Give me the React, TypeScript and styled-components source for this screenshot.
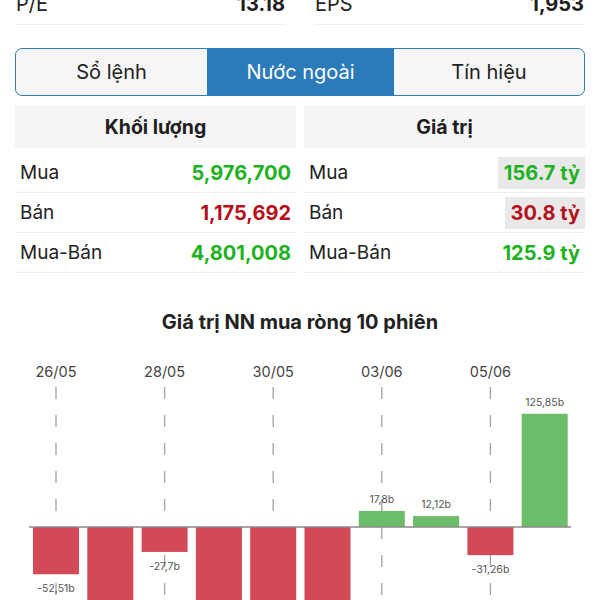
import styled, { createGlobalStyle } from 'styled-components'

const GlobalStyle = createGlobalStyle`
  html, body {
    margin: 0;
    padding: 0;
    background: #fff;
    overflow: hidden;
  }
  body {
    font-family: Inter, 'Noto Sans', sans-serif;
    color: #222;
  }
`

const GREEN = '#1fb21f'
const RED = '#b5111b'

type Row = { label: string; value: string; color: string; marked?: boolean }

const volumeRows: Row[] = [
  { label: 'Mua', value: '5,976,700', color: GREEN },
  { label: 'Bán', value: '1,175,692', color: RED },
  { label: 'Mua-Bán', value: '4,801,008', color: GREEN }
]

const valueRows: Row[] = [
  { label: 'Mua', value: '156.7 tỷ', color: GREEN, marked: true },
  { label: 'Bán', value: '30.8 tỷ', color: RED, marked: true },
  { label: 'Mua-Bán', value: '125.9 tỷ', color: GREEN }
]

// net foreign buy value, billions
const sessions = [
  { date: '26/05', value: -52.51, label: '-52,51b' },
  { date: '', value: -110, label: '' },
  { date: '28/05', value: -27.7, label: '-27,7b' },
  { date: '', value: -120, label: '' },
  { date: '30/05', value: -105, label: '' },
  { date: '', value: -98, label: '' },
  { date: '03/06', value: 17.8, label: '17,8b' },
  { date: '', value: 12.12, label: '12,12b' },
  { date: '05/06', value: -31.26, label: '-31,26b' },
  { date: '', value: 125.85, label: '125,85b' }
]

const tabs = ['Sổ lệnh', 'Nước ngoài', 'Tín hiệu']

const NetChart = () => {
  const zeroY = 182
  const scale = 0.9
  const step = 54.3
  const barW = 46
  const firstX = 41
  return (
    <ChartSvg width={570} height={270} viewBox="0 0 570 270">
      {sessions.map((s, i) =>
        s.date ? (
          <g key={'d' + i}>
            <text
              x={firstX + i * step}
              y={32}
              textAnchor="middle"
              fontSize={14.5}
              fill="#444"
              fontFamily="Inter, sans-serif"
            >
              {s.date}
            </text>
            <line
              x1={firstX + i * step}
              x2={firstX + i * step}
              y1={42}
              y2={270}
              stroke="#a8a8a8"
              strokeWidth={1.4}
              strokeDasharray="12 16"
            />
          </g>
        ) : null
      )}
      {sessions.map((s, i) => {
        const cx = firstX + i * step
        const h = Math.abs(s.value) * scale
        const y = s.value >= 0 ? zeroY - h : zeroY
        return (
          <g key={'b' + i}>
            <rect
              x={cx - barW / 2}
              y={y}
              width={barW}
              height={h}
              fill={s.value >= 0 ? '#6bbd69' : '#d24a57'}
            />
            {s.label && (
              <text
                x={cx}
                y={s.value >= 0 ? y - 8 : y + h + 18}
                textAnchor="middle"
                fontSize={10.5}
                fill="#555"
                fontFamily="Inter, sans-serif"
              >
                {s.label}
              </text>
            )}
          </g>
        )
      })}
      <line x1={14} x2={556} y1={zeroY} y2={zeroY} stroke="#8a8a8a" strokeWidth={1.3} />
    </ChartSvg>
  )
}

const StatTable = ({ title, rows }: { title: string; rows: Row[] }) => (
  <Column>
    <ColumnHeader>{title}</ColumnHeader>
    {rows.map((r) => (
      <DataRow key={r.label}>
        <RowLabel>{r.label}</RowLabel>
        <RowValue $color={r.color} $marked={r.marked}>
          {r.value}
        </RowValue>
      </DataRow>
    ))}
  </Column>
)

export default function App() {
  return (
    <Page>
      <GlobalStyle />
      <StatsRow>
        <StatCell>
          <span>P/E</span>
          <StatValue>13.18</StatValue>
        </StatCell>
        <StatCell>
          <span>EPS</span>
          <StatValue>1,953</StatValue>
        </StatCell>
      </StatsRow>

      <Tabs>
        {tabs.map((t, i) => (
          <Tab key={t} $active={i === 1}>
            {t}
          </Tab>
        ))}
      </Tabs>

      <Tables>
        <StatTable title="Khối lượng" rows={volumeRows} />
        <StatTable title="Giá trị" rows={valueRows} />
      </Tables>

      <ChartTitle>Giá trị NN mua ròng 10 phiên</ChartTitle>
      <NetChart />
    </Page>
  )
}

const Page = styled.div`
  width: 600px;
  height: 600px;
  box-sizing: border-box;
  padding: 0 15px;
  overflow: hidden;
`

const StatsRow = styled.div`
  display: grid;
  grid-template-columns: 1fr 1fr;
  column-gap: 28px;
  margin-top: -16px;
`

const StatCell = styled.div`
  display: flex;
  justify-content: space-between;
  align-items: center;
  height: 40px;
  border-bottom: 1px solid #efefef;
  font-size: 20px;
  color: #222;
  padding: 0 1px;
`

const StatValue = styled.span`
  font-weight: 700;
  color: #1e1e1e;
`

const Tabs = styled.div`
  display: grid;
  grid-template-columns: 191px 187px 1fr;
  margin-top: 23px;
  height: 48px;
  box-sizing: border-box;
  border: 1.5px solid #2f7dbc;
  border-radius: 7px;
  overflow: hidden;
  background: #f6f6f6;
`

const Tab = styled.div<{ $active?: boolean }>`
  display: flex;
  align-items: center;
  justify-content: center;
  font-size: 20px;
  color: ${(p) => (p.$active ? '#fff' : '#222')};
  background: ${(p) => (p.$active ? '#2b7bba' : 'transparent')};
`

const Tables = styled.div`
  display: grid;
  grid-template-columns: 1fr 1fr;
  column-gap: 8px;
  margin-top: 10px;
`

const Column = styled.div`
  display: flex;
  flex-direction: column;
`

const ColumnHeader = styled.div`
  height: 42px;
  display: flex;
  align-items: center;
  justify-content: center;
  background: #f5f5f5;
  font-size: 19.5px;
  font-weight: 700;
  color: #1e1e1e;
  margin-bottom: 5px;
`

const DataRow = styled.div`
  height: 40px;
  box-sizing: border-box;
  display: flex;
  align-items: center;
  justify-content: space-between;
  border-bottom: 1px solid #eeeeee;
  padding: 0 0 0 5px;
`

const RowLabel = styled.span`
  font-size: 19px;
  color: #222;
`

const RowValue = styled.span<{ $color: string; $marked?: boolean }>`
  font-size: 20px;
  font-weight: 700;
  color: ${(p) => p.$color};
  background: ${(p) => (p.$marked ? '#e9e9e9' : 'transparent')};
  height: 32px;
  display: flex;
  align-items: center;
  padding: 0 5px 0 6px;
`

const ChartTitle = styled.div`
  margin-top: 37px;
  text-align: center;
  font-size: 20px;
  font-weight: 700;
  color: #222;
  height: 24px;
  line-height: 24px;
`

const ChartSvg = styled.svg`
  display: block;
  margin-top: 11px;
`
